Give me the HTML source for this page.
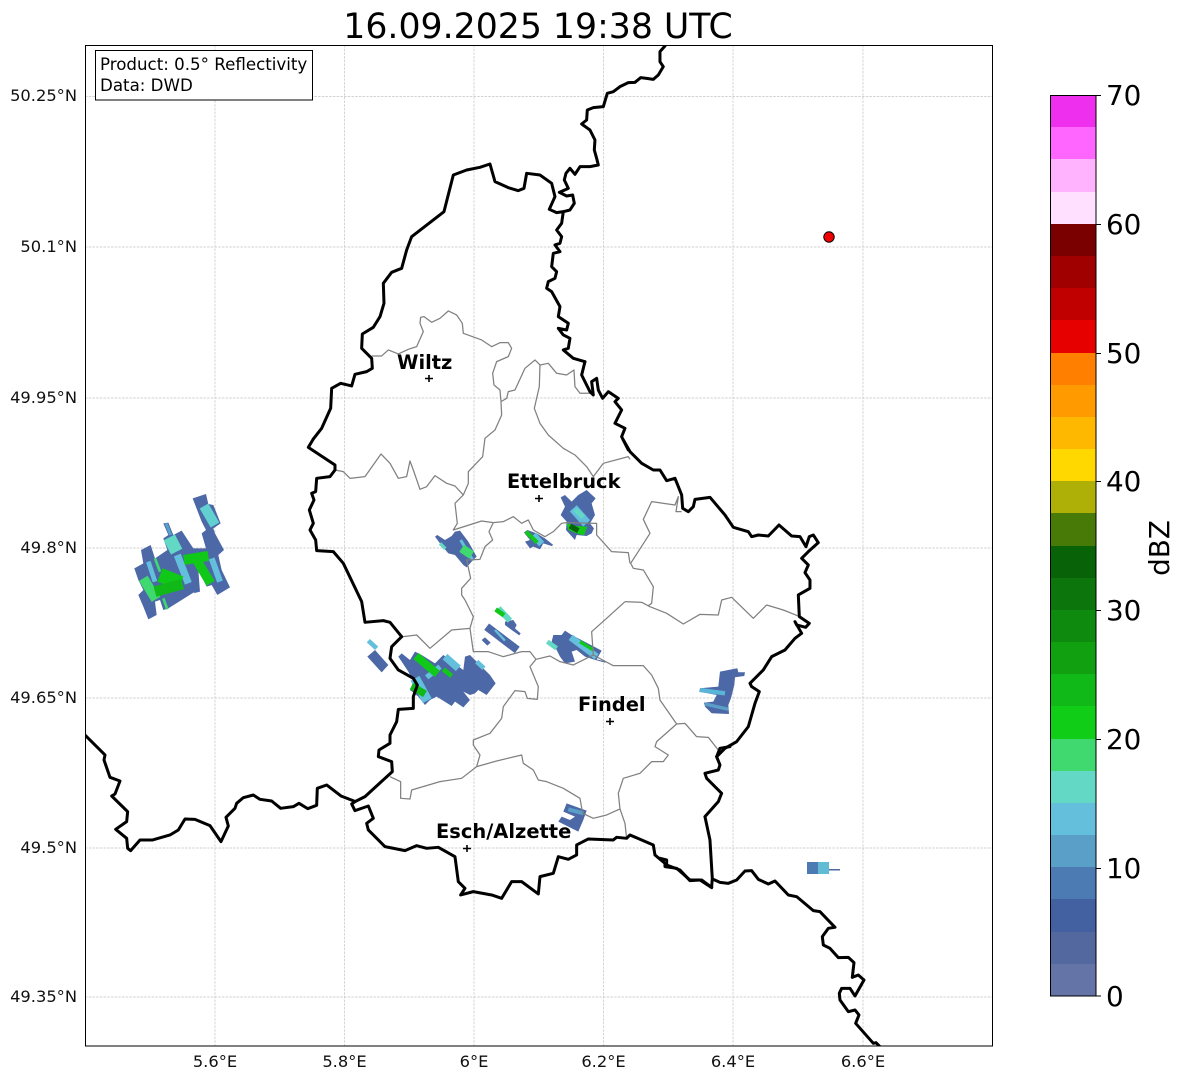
<!DOCTYPE html>
<html><head><meta charset="utf-8"><style>
html,body{margin:0;padding:0;background:#fff;width:1184px;height:1081px;overflow:hidden}
svg{display:block;font-family:"DejaVu Sans",sans-serif}
</style></head><body>
<svg width="1184" height="1081" viewBox="0 0 1184 1081" xmlns="http://www.w3.org/2000/svg">
<defs><clipPath id="f"><rect x="85" y="45" width="908" height="1001"/></clipPath></defs>
<rect width="1184" height="1081" fill="#fff"/>
<g font-size="16.3" fill="#111" text-anchor="end">
<text x="77" y="101">50.25°N</text>
<text x="77" y="252">50.1°N</text>
<text x="77" y="403">49.95°N</text>
<text x="77" y="553">49.8°N</text>
<text x="77" y="703">49.65°N</text>
<text x="77" y="853">49.5°N</text>
<text x="77" y="1002">49.35°N</text>
</g>
<g font-size="16.3" fill="#111" text-anchor="middle">
<text x="215" y="1067">5.6°E</text>
<text x="344.5" y="1067">5.8°E</text>
<text x="474" y="1067">6°E</text>
<text x="603.5" y="1067">6.2°E</text>
<text x="733" y="1067">6.4°E</text>
<text x="863" y="1067">6.6°E</text>
</g>
<g>
<rect x="1050" y="964" width="46" height="32" fill="#6474a6"/>
<rect x="1050" y="932" width="46" height="32" fill="#52689f"/>
<rect x="1050" y="899" width="46" height="33" fill="#4360a0"/>
<rect x="1050" y="867" width="46" height="32" fill="#4c7bb3"/>
<rect x="1050" y="835" width="46" height="32" fill="#5a9fc7"/>
<rect x="1050" y="803" width="46" height="32" fill="#64bfdd"/>
<rect x="1050" y="771" width="46" height="32" fill="#62d8c5"/>
<rect x="1050" y="739" width="46" height="32" fill="#3fd970"/>
<rect x="1050" y="706" width="46" height="33" fill="#10ce18"/>
<rect x="1050" y="674" width="46" height="32" fill="#10b818"/>
<rect x="1050" y="642" width="46" height="32" fill="#10a010"/>
<rect x="1050" y="610" width="46" height="32" fill="#0e8a0e"/>
<rect x="1050" y="578" width="46" height="32" fill="#0c760c"/>
<rect x="1050" y="546" width="46" height="32" fill="#086208"/>
<rect x="1050" y="513" width="46" height="33" fill="#487a08"/>
<rect x="1050" y="481" width="46" height="32" fill="#aeb008"/>
<rect x="1050" y="449" width="46" height="32" fill="#ffd800"/>
<rect x="1050" y="417" width="46" height="32" fill="#ffb800"/>
<rect x="1050" y="385" width="46" height="32" fill="#ff9a00"/>
<rect x="1050" y="353" width="46" height="32" fill="#ff8000"/>
<rect x="1050" y="320" width="46" height="33" fill="#e60000"/>
<rect x="1050" y="288" width="46" height="32" fill="#c00000"/>
<rect x="1050" y="256" width="46" height="32" fill="#a00000"/>
<rect x="1050" y="224" width="46" height="32" fill="#7a0000"/>
<rect x="1050" y="192" width="46" height="32" fill="#ffe0ff"/>
<rect x="1050" y="159" width="46" height="33" fill="#ffb3ff"/>
<rect x="1050" y="127" width="46" height="32" fill="#ff66ff"/>
<rect x="1050" y="95" width="46" height="32" fill="#ee30ee"/>
</g>
<rect x="1050.5" y="95.5" width="45.5" height="900.5" fill="none" stroke="#000" stroke-width="1"/>
<path d="M1096 95.5h5M1096 224.500h5M1096 353.500h5M1096 481.500h5M1096 610.500h5M1096 739.500h5M1096 868.500h5M1096 996h5" stroke="#000" stroke-width="1" fill="none"/>
<g font-size="27.8" fill="#000">
<text x="1106" y="105">70</text>
<text x="1106" y="234">60</text>
<text x="1106" y="363">50</text>
<text x="1106" y="491">40</text>
<text x="1106" y="620">30</text>
<text x="1106" y="749">20</text>
<text x="1106" y="878">10</text>
<text x="1106" y="1006">0</text>
</g>
<text transform="translate(1169,548) rotate(-90)" font-size="27.8" text-anchor="middle" fill="#000">dBZ</text>
<text x="538" y="38" font-size="34.7" text-anchor="middle" fill="#000">16.09.2025 19:38 UTC</text>
<g clip-path="url(#f)">
<g stroke="#c4c4c4" stroke-width="0.7" stroke-dasharray="2.5 1.2" fill="none">
<path d="M215 45V1046M344.5 45V1046M474 45V1046M603.5 45V1046M733 45V1046M863 45V1046"/>
<path d="M85 96.5H992M85 247H992M85 398H992M85 548H992M85 698H992M85 848H992M85 997H992"/>
</g>
<g fill="none">
<g transform="translate(80,480) scale(.3333)">
<polygon fill="#4c68a6" points="338,55 378,42 385,72 400,75 422,130 400,145 405,160 432,210 415,225 425,270 450,322 412,345 395,315 380,320 355,270 360,335 340,340 345,335 265,385 250,390 240,360 225,365 230,405 205,418 190,380 175,345 190,330 175,300 163,265 190,250 183,210 212,195 225,235 240,225 262,210 250,175 265,165 250,130 265,128 280,165 305,152 340,205 378,205 365,160 378,150 365,125"/>
<path stroke="#62cfd0" stroke-width="30" d="M372 78L405 135"/>
<path stroke="#5a9fc7" stroke-width="9" d="M258 130L272 165"/>
<path stroke="#62d8c5" stroke-width="38" d="M268 172L290 215"/>
<path stroke="#64bfdd" stroke-width="22" d="M292 225L325 310"/>
<path stroke="#64bfdd" stroke-width="14" d="M205 245L225 305"/>
<path stroke="#64bfdd" stroke-width="18" d="M395 235L420 305"/>
<path stroke="#3fd970" stroke-width="30" d="M190 295L228 358"/>
<path stroke="#10c818" stroke-width="44" d="M240 285L302 310"/>
<path stroke="#10b818" stroke-width="32" d="M225 335L308 312"/>
<path stroke="#10c818" stroke-width="30" d="M312 240L385 228"/>
<path stroke="#10c818" stroke-width="28" d="M350 240L392 310"/>
<path stroke="#3fd970" stroke-width="8" d="M225 235L240 275M250 355L262 388"/>
</g>
<g transform="translate(300,360) scale(.3333)">
<polygon fill="#4c68a6" points="860,390 887,415 875,430 885,465 870,490 882,505 875,520 860,528 830,525 825,540 798,510 800,485 782,465 795,440 782,412 795,405 815,425 835,405"/>
<path stroke="#64bfdd" stroke-width="28" d="M820 445L860 490"/>
<path stroke="#62d8c5" stroke-width="14" d="M825 448L850 472"/>
<polygon fill="#10c818" points="800,490 830,498 862,500 852,526 830,520 805,510"/>
<path stroke="#086208" stroke-width="16" d="M810 498L835 512"/>
<polygon fill="#4c68a6" points="405,530 412,525 435,540 455,528 465,515 480,512 505,545 530,590 515,605 500,622 490,615 465,585 445,580 420,550"/>
<path stroke="#64bfdd" stroke-width="9" d="M482 540L518 600"/>
<path stroke="#3fd970" stroke-width="26" d="M485 565L515 585"/>
<path stroke="#62d8c5" stroke-width="10" d="M420 550L436 566"/>
<polygon fill="#4c68a6" points="672,518 682,510 710,520 735,535 760,555 755,558 730,550 720,568 700,560 690,565 675,545 690,540"/>
<path stroke="#64bfdd" stroke-width="20" d="M700 525L725 552"/>
<path stroke="#10c818" stroke-width="12" d="M678 515L712 548"/>
</g>
<g transform="translate(330,600) scale(.3333)">
<path stroke="#4c68a6" stroke-width="24" d="M470 80L562 150"/>
<polygon fill="#4c68a6" points="455,120 465,112 482,128 472,137"/>
<polygon fill="#4c68a6" points="525,65 550,60 560,75 555,85 572,100 568,106 545,90 525,75"/>
<path stroke="#64bfdd" stroke-width="7" d="M495 90L525 122"/>
<path stroke="#62d8c5" stroke-width="18" d="M505 25L540 62"/>
<path stroke="#10c818" stroke-width="14" d="M497 28L522 46"/>
<polygon fill="#4c68a6" points="670,105 695,105 705,92 725,105 745,115 815,152 800,178 830,185 825,188 790,178 765,170 740,150 725,155 735,185 705,190 690,170 675,140 665,125"/>
<path stroke="#62d8c5" stroke-width="14" d="M652 125L680 145"/>
<path stroke="#64bfdd" stroke-width="20" d="M722 112L800 170"/>
<path stroke="#10c818" stroke-width="10" d="M750 125L790 150"/>
<polygon fill="#4c68a6" points="112,170 135,150 175,195 155,217"/>
<path stroke="#64bfdd" stroke-width="14" d="M115 122L140 145"/>
<polygon fill="#4c68a6" points="205,170 215,160 240,180 255,155 275,165 315,190 340,165 400,210 405,170 420,165 480,225 497,250 470,285 445,270 435,280 420,285 400,275 420,300 400,322 375,305 365,318 320,290 300,300 285,315 265,290 240,270 250,245 235,215"/>
<path stroke="#64bfdd" stroke-width="30" d="M255 235L292 302"/>
<path stroke="#64bfdd" stroke-width="16" d="M290 232L330 200"/>
<path stroke="#10c818" stroke-width="24" d="M258 168L322 222"/>
<path stroke="#10b818" stroke-width="22" d="M245 258L285 282"/>
<path stroke="#64bfdd" stroke-width="22" d="M345 170L385 205"/>
<path stroke="#10c818" stroke-width="14" d="M340 208L365 228"/>
<path stroke="#64bfdd" stroke-width="14" d="M440 185L462 205"/>
<polygon fill="#4c68a6" points="710,610 770,632 760,660 745,695 685,665 695,650 720,660 735,650 700,635"/>
<path stroke="#5a9fc7" stroke-width="12" d="M715 628L760 640"/>
</g>
<g transform="translate(600,440) scale(.3333)">
<polygon fill="#4c68a6" points="360,695 385,690 412,685 415,697 435,697 433,708 405,712 403,735 393,775 385,795 387,822 335,820 315,800 312,788 340,785 350,765 298,755 300,745 355,740"/>
<path stroke="#5ab6d8" stroke-width="13" d="M300 750L375 760"/>
<path stroke="#5a9fc7" stroke-width="10" d="M315 792L385 808"/>
</g>
<rect x="807" y="862" width="11" height="12" fill="#4c7bb3"/>
<rect x="818" y="862" width="11" height="12" fill="#5fbcd4"/>
<rect x="829" y="869" width="11" height="1.5" fill="#4c68a6"/>
</g>
</g>
<g fill="none" stroke="#808080" stroke-width="3.75" stroke-linejoin="round">
<path transform="translate(300,40) scale(.3333)" d="M215 948L245 948 265 930 295 942 325 928 350 920 370 875 360 850 362 832 372 830 395 847 420 835 445 813 470 825 487 850 490 880 545 900 575 920 600 908 625 908 635 925 625 950 590 965 578 1000 582 1035 600 1050 603 1085M603 1085L620 1075 625 1055 645 1050 675 985 705 960 720 975M720 975L745 970 770 1000 800 1005 822 990 825 1040 840 1060 870 1060"/>
<path transform="translate(300,360) scale(.3333)" d="M603 125L605 165 585 210 555 235 548 290 505 335 505 370 490 405 465 430 472 490 460 510 545 483 580 488 610 485 640 470 665 490 685 480 700 510 735 530 760 515 785 490 800 488 890 490 890 525 935 575 985 578 990 610M720 15L718 80 703 145 720 190 745 225 790 265 825 285 860 320 880 350 910 310 985 290 990 298M105 330L130 335 150 355 195 350 243 282 270 310 295 355 320 350 330 303 340 330 360 388 380 380 405 347 440 370 465 378 490 405M580 488L567 515 578 540 555 560 540 598 500 600 512 655 485 685 485 705 495 720"/>
<path transform="translate(330,600) scale(.3333)" d="M405 0L430 50 420 85 365 90 300 145 260 105 220 110M420 85L430 155 475 155 520 170 575 155 600 155 618 178 660 168 690 185 730 195 760 180 790 165 850 197 940 197 965 225 985 265 990 300 1040 372 1065 370 1100 410 1135 412 1165 450M618 178L600 200 625 260 622 298 592 295 585 275 555 272 520 320 515 355 480 400 430 420 430 435 450 465 440 500 500 483 575 465 580 490 610 510 625 540 650 545 700 565 750 595 758 640 790 655 830 645 870 627 885 670 890 715M440 500L395 535 330 545 245 570 240 597 212 595 212 545 180 530M790 165L785 95 830 55 885 5M1040 372L980 425 975 440 1015 465 1000 485 965 485 930 520 880 535 865 580 870 627"/>
<path transform="translate(600,440) scale(.3333)" d="M75 485L125 487 150 500 200 520 250 552 300 523 355 525 365 480 395 472 460 535 500 495 550 510 600 530M92 370L150 280 130 238 155 185 225 195 235 170 228 215 245 215M92 370L100 385 130 390 160 440 155 490 145 497"/>
</g>
<g clip-path="url(#f)" fill="none" stroke="#000" stroke-width="9" stroke-linejoin="round" stroke-linecap="round">
<path transform="translate(300,40) scale(.3333)" d="M1105 0L1095 18 1080 35 1080 65 1090 80 1075 105 1060 118 1040 115 1022 113 1005 127 985 128 960 140 940 155 922 160 910 200 880 203 862 210 860 240 845 252 870 270 885 300 883 330 890 355 895 375 870 380 840 380 825 403 810 385 798 400 793 420 805 445 778 457 800 468 818 465 823 490 810 510 790 515 770 518 748 508 765 470 755 430 720 405 680 400 672 445 655 452 625 443 585 425 570 372 540 382 500 390 460 405 432 515 335 590 320 630 305 685 275 697 250 730 252 790 240 830 220 862 187 882 185 925 215 955 217 985 200 995 165 1003 155 1038 122 1030 95 1045 92 1105 65 1165 40 1197M790 515L785 550 770 570 785 590 780 610 765 615 780 635 760 640 755 680 770 695 765 715 745 725 740 745 755 755 780 800 775 830 805 850 800 870 775 865 790 885 810 895 805 925 790 930 820 955 855 965"/>
<path transform="translate(300,360) scale(.3333)" d="M855 5L845 45 870 95 880 105 875 65 890 55 895 90 908 115 925 95 955 115 945 125 965 150 945 190 975 205 965 230 985 270M40 237L25 262 105 315 105 330 90 350 50 355 47 395 35 400 42 420 28 450 40 490 30 510 47 540 50 572 100 575 130 610 185 725 195 787 250 782 270 787 305 830"/>
<path transform="translate(600,440) scale(.3333)" d="M70 0L90 35 125 70 160 90 180 90 200 122 225 115 245 165 248 205 265 215 280 200 285 178 330 172 375 225 400 262 445 275 455 290 475 285 505 288 537 255 575 288 600 290 618 320 628 290 640 285 655 308 625 335 605 355 625 375 615 398 630 420 630 445 595 465 598 530 628 550 617 562 590 555 585 545 605 580 585 595 555 630 515 650 490 690 450 730 455 740 478 755 465 790 445 860 410 905 375 925 350 950"/>
<path transform="translate(330,600) scale(.3333)" d="M215 110L185 140 180 175 205 210 250 235 262 255 250 290 250 325 205 328 200 365 180 405 180 430 147 450 145 470 185 485 187 515 105 590 75 605 65 612 75 632 115 618 130 655 110 670 115 690 165 740 225 752 260 737 290 745 325 742 375 770 385 845 405 865 392 885 430 875 485 885 515 895 545 845 575 845 625 882 630 830 670 820 685 770 715 778 740 765 740 735 775 717 850 720 860 712 890 715 900 705 970 735 975 765 1005 790 1005 800 1040 805 1080 840 1115 840 1145 862M1125 650L1140 720 1147 835 1145 862M1125 650L1165 605 1175 580 1130 535 1125 520 1165 510 1170 495 1160 470 1170 445 1200 440"/>
<path transform="translate(80,720) scale(.3333)" d="M-10 20L15 45 75 105 72 120 90 172 120 183 105 222 95 228 143 275 140 305 107 328 140 355 143 385 152 392 180 360 218 360 270 345 295 330 315 297 345 298 390 317 423 365 445 318 438 292 465 265 470 250 490 233 520 225 540 238 575 243 602 265 640 260 657 250 683 266 710 256 712 205 740 195 783 228 822 243"/>
<path transform="translate(660,840) scale(.3333)" d="M0 55L20 60 20 75 60 90 90 122 120 120 155 143M160 118L180 127 205 130 230 120 255 93 275 92 295 118 325 132 345 123 385 165 410 170 460 212 480 215 525 262 505 265 487 290 490 315 510 325 535 353 565 352 582 368 577 412 595 405 612 420 585 468 570 445 545 445 538 460 540 480 565 515 585 510 597 525 587 550 640 610 648 608 660 620 670 640"/>
</g>
<g stroke="#000" stroke-width="1.6" fill="none">
<path d="M425 378.5H433M429 375V382"/>
<path d="M535 498.500H543M539 495V502"/>
<path d="M606 721.500H614M610 718V725"/>
<path d="M463 848.500H471M467 845V852"/>
</g>
<circle cx="829" cy="237" r="5.2" fill="#f00000" stroke="#000" stroke-width="1"/>
<g font-size="19.44" font-weight="700" fill="#000">
<text x="397" y="369">Wiltz</text>
<text x="507" y="488">Ettelbruck</text>
<text x="578" y="711">Findel</text>
<text x="436" y="838">Esch/Alzette</text>
</g>
<rect x="85.5" y="45.5" width="907" height="1000.5" fill="none" stroke="#000" stroke-width="1"/>
<rect x="95.5" y="50.5" width="217" height="49.5" fill="#fff" stroke="#000" stroke-width="1"/>
<g font-size="16.67" fill="#000">
<text x="100" y="70">Product: 0.5° Reflectivity</text>
<text x="100" y="91">Data: DWD</text>
</g>
</svg>
</body></html>
